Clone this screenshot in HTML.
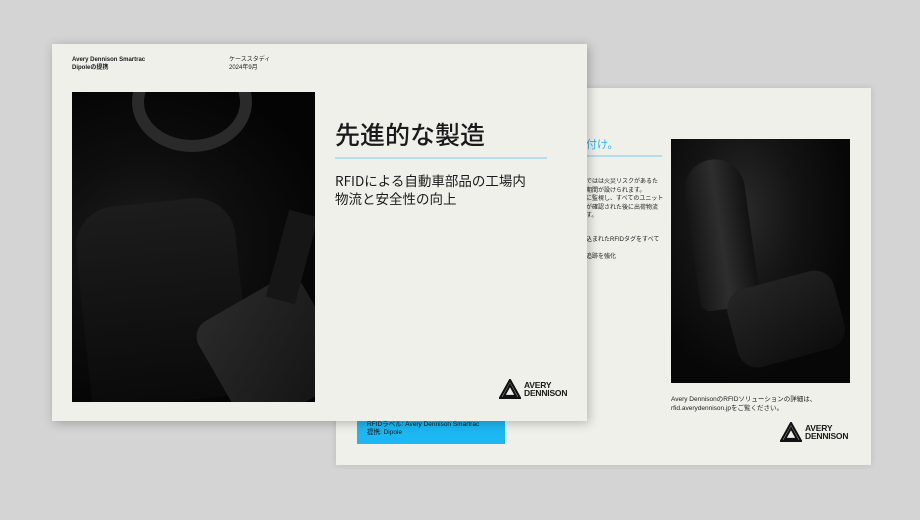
<!DOCTYPE html>
<html><head><meta charset="utf-8"><style>
*{margin:0;padding:0;box-sizing:border-box}
body{width:920px;height:520px;background:#d4d4d4;position:relative;overflow:hidden;font-family:"Liberation Sans","Noto Sans CJK JP",sans-serif;color:#1a1a1a}
.pg{position:absolute;background:#f0f0eb}
.back{left:336px;top:88px;width:535px;height:377px;box-shadow:0 0 6px rgba(0,0,0,.12)}
.front{left:52px;top:44px;width:535px;height:377px;box-shadow:2px 2px 10px rgba(0,0,0,.25)}
.t{position:absolute;white-space:nowrap}
.logo{position:absolute;display:flex;align-items:center}
.logo span{font-weight:bold;font-size:8.5px;line-height:8px;letter-spacing:-.2px;margin-left:3px}
</style></head><body>
<div class="pg back">
 <div class="t" style="left:250px;top:48px;font-size:11px;color:#2ab5ea">付け。</div>
 <div style="position:absolute;left:250px;top:67px;width:76px;height:1.5px;background:#b3def1"></div>
 <div class="t" style="left:250px;top:90px;font-size:6px;line-height:8.5px">ではは火災リスクがあるた<br>期間が設けられます。<br>に監視し、すべてのユニット<br>が確認された後に出荷物流<br>す。</div>
 <div class="t" style="left:250px;top:146px;font-size:6px">込まれたRFIDタグをすべて</div>
 <div class="t" style="left:250px;top:163px;font-size:6px">追跡を強化</div>
 <div style="position:absolute;left:335px;top:51px;width:179px;height:244px;background:radial-gradient(ellipse at 40% 30%,#2a2a2a 0%,#141414 35%,#070707 70%);overflow:hidden">
  <div style="position:absolute;left:20px;top:20px;width:60px;height:150px;border-radius:30px 30px 10px 10px;background:linear-gradient(90deg,#161616,#2e2e2e,#121212);transform:rotate(-8deg)"></div>
  <div style="position:absolute;left:60px;top:140px;width:110px;height:80px;border-radius:20px;background:linear-gradient(160deg,#262626,#0c0c0c);transform:rotate(-15deg)"></div>
 </div>
 <div class="t" style="left:335px;top:307px;font-size:6.5px;line-height:9px">Avery DennisonのRFIDソリューションの詳細は、<br>rfid.averydennison.jpをご覧ください。</div>
 <div class="logo" style="left:444px;top:334px"><svg width="22" height="20" viewBox="0 0 22 20"><path d="M11 1L21 19H1Z M11 6L17 17H5Z" fill="none" stroke="#111" stroke-width="2.2"/></svg><span>AVERY<br>DENNISON</span></div>
 <div style="position:absolute;left:21px;top:330px;width:148px;height:26px;background:#1db8f3"><div class="t" style="left:10px;top:3px;font-size:6.5px;line-height:8px">RFIDラベル: Avery Dennison Smartrac<br>提携: Dipole</div></div>
</div>
<div class="pg front">
 <div class="t" style="left:20px;top:13px;font-size:6px;line-height:7.5px;font-weight:bold">Avery Dennison Smartrac<br>Dipoleの提携</div>
 <div class="t" style="left:177px;top:13px;font-size:6px;line-height:7.5px">ケーススタディ<br>2024年9月</div>
 <div style="position:absolute;left:20px;top:48px;width:243px;height:310px;background:radial-gradient(ellipse at 30% 50%,#1e1e1e 0%,#0e0e0e 40%,#040404 80%);overflow:hidden">
  <div style="position:absolute;left:60px;top:-40px;width:120px;height:100px;border-radius:50%;border:12px solid #2a2a2a"></div>
  <div style="position:absolute;left:10px;top:110px;width:160px;height:200px;border-radius:40px 40px 0 0;background:linear-gradient(180deg,#1c1c1c,#0a0a0a);transform:rotate(-6deg)"></div>
  <div style="position:absolute;left:140px;top:200px;width:120px;height:120px;border-radius:18px;background:linear-gradient(150deg,#2a2a2a,#121212);transform:rotate(-30deg)"></div>
  <div style="position:absolute;left:205px;top:120px;width:30px;height:90px;background:#161616;transform:rotate(15deg)"></div>
 </div>
 <div class="t" style="left:283px;top:72px;font-size:25px;font-family:'Noto Sans CJK JP',sans-serif;font-weight:500">先進的な製造</div>
 <div style="position:absolute;left:283px;top:113px;width:212px;height:1.5px;background:#b3def1"></div>
 <div class="t" style="left:283px;top:127px;font-size:13.5px;line-height:18px;font-family:'Noto Sans CJK JP',sans-serif">RFIDによる自動車部品の工場内<br>物流と安全性の向上</div>
 <div class="logo" style="left:447px;top:335px"><svg width="22" height="20" viewBox="0 0 22 20"><path d="M11 1L21 19H1Z M11 6L17 17H5Z" fill="none" stroke="#111" stroke-width="2.2"/></svg><span>AVERY<br>DENNISON</span></div>
</div>
</body></html>
